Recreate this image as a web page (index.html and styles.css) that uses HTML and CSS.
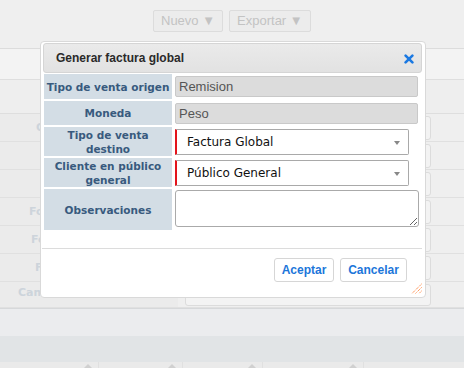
FILE: index.html
```html
<!DOCTYPE html>
<html lang="es">
<head>
    <meta charset="UTF-8">
    <title>Generar factura global</title>
    <link rel="stylesheet" href="styles.css">
</head>
<body>
    <!-- Page behind the modal -->
    <div class="page">
        <div class="toolbar">
            <span class="tb-btn">Nuevo &#9660;</span>
            <span class="tb-btn">Exportar &#9660;</span>
        </div>
        <div class="subbar"></div>
        <div class="section"></div>

        <div class="bg-form">
            <div class="bg-row"><div class="bg-lbl"><span class="bg-txt pad-36">Con</span></div><div class="bg-field"><div class="bg-input"></div></div></div>
            <div class="bg-row"><div class="bg-lbl"></div><div class="bg-field"><div class="bg-input"></div></div></div>
            <div class="bg-row"><div class="bg-lbl"></div><div class="bg-field"><div class="bg-input"></div></div></div>
            <div class="bg-row"><div class="bg-lbl"><span class="bg-txt pad-29">Fol.</span></div><div class="bg-field"><div class="bg-input"></div></div></div>
            <div class="bg-row"><div class="bg-lbl"><span class="bg-txt pad-31">Forma de envío</span></div><div class="bg-field"><div class="bg-input"></div></div></div>
            <div class="bg-row"><div class="bg-lbl"><span class="bg-txt pad-35">Fecha de emisión</span></div><div class="bg-field"><div class="bg-input"></div></div></div>
            <div class="bg-row bg-row-last"><div class="bg-lbl"><span class="bg-txt pad-18">Campo adicional</span></div><div class="bg-field"><div class="bg-input"></div></div></div>
        </div>

        <div class="bar1"></div>
        <div class="bar2"></div>
        <div class="thead">
            <div class="th" style="width: 98px"><span class="sort"></span></div>
            <div class="th" style="width: 83px"><span class="sort"></span></div>
            <div class="th" style="width: 79px"><span class="sort"></span></div>
            <div class="th" style="width: 100px"><span class="sort"></span></div>
            <div class="th th-last"></div>
        </div>
    </div>

    <!-- Modal dialog -->
    <div class="dialog">
        <div class="dlg-title">
            <span>Generar factura global</span>
            <svg class="close" width="10" height="10" viewBox="0 0 10 10">
                <path d="M1.6 1.6 L8.4 8.4 M8.4 1.6 L1.6 8.4" stroke="#1b79e2" stroke-width="2.6" stroke-linecap="round"/>
            </svg>
        </div>

        <div class="dlg-form">
            <div class="lbl">Tipo de venta origen</div>
            <div class="cell"><div class="ro-input">Remision</div></div>

            <div class="lbl">Moneda</div>
            <div class="cell"><div class="ro-input">Peso</div></div>

            <div class="lbl">Tipo de venta<br>destino</div>
            <div class="cell">
                <div class="select"><span>Factura Global</span><span class="arrow"></span></div>
            </div>

            <div class="lbl">Cliente en público<br>general</div>
            <div class="cell">
                <div class="select"><span>Público General</span><span class="arrow"></span></div>
            </div>

            <div class="lbl">Observaciones</div>
            <div class="cell cell-top"><textarea class="obs"></textarea></div>
        </div>

        <div class="dlg-foot">
            <button class="btn btn-ok">Aceptar</button>
            <button class="btn btn-cancel">Cancelar</button>
        </div>

        <svg class="grip" width="11" height="11" viewBox="0 0 11 11">
            <path d="M10.5 1 L1 10.5 M10.5 4.5 L4.5 10.5 M10.5 8 L8 10.5" stroke="#ff6a13" stroke-width="1" stroke-dasharray="1 1"/>
        </svg>
    </div>
</body>
</html>
```

FILE: styles.css
```css
body {
    margin: 0;
    width: 464px;
    height: 368px;
    overflow: hidden;
    font-family: "Liberation Sans", Arial, sans-serif;
    background: #eaeaea;
    position: relative;
}

/* background page */
.toolbar {
    height: 49px;
    box-sizing: border-box;
    padding: 10px 0 0 153px;
    display: flex;
    gap: 6px;
    background: #efefef;
    border-bottom: 1px solid #dcdcdc;
}
.tb-btn {
    height: 22px;
    box-sizing: border-box;
    padding: 0 7px;
    border: 1px solid #dcdcdc;
    border-radius: 2px;
    background: #ececec;
    color: #c3c3c3;
    font-size: 13px;
    line-height: 20px;
}
.subbar {
    height: 30px;
    background: #f3f3f3;
    border-bottom: 1px solid #dedede;
}
.section {
    height: 33px;
    background: #eeeeee;
    border-bottom: 1px solid #dedede;
}
.bg-row {
    display: flex;
    height: 27px;
    border-bottom: 1px solid #e0e0e0;
}
.bg-row-last {
    height: 25px;
}
.bg-lbl {
    width: 178px;
    background: #ebebeb;
}
.bg-txt {
    display: block;
    white-space: nowrap;
    font: bold 11px "DejaVu Sans", Verdana, sans-serif;
    line-height: 27px;
    color: #cdd4db;
}
.bg-row-last .bg-txt {
    line-height: 22px;
}
.pad-18 { padding-left: 18px; }
.pad-29 { padding-left: 29px; }
.pad-31 { padding-left: 31px; }
.pad-35 { padding-left: 35px; }
.pad-36 { padding-left: 36px; }
.bg-field {
    flex: 1;
    padding: 2px 33px 1px 7px;
    background: #efefef;
}
.bg-input {
    height: 100%;
    box-sizing: border-box;
    border: 1px solid #dcdcdc;
    border-radius: 3px;
    background: #f3f3f3;
}
.bar1 {
    height: 27px;
    background: #ebecee;
    border-top: 1px solid #d6d8da;
}
.bar2 {
    height: 26px;
    background: #e1e4e6;
}
.thead {
    display: flex;
    height: 20px;
    background: #eaeaea;
}
.th {
    position: relative;
    border-right: 1px solid #e0e0e0;
}
.th-last {
    flex: 1;
    border-right: none;
}
.sort {
    position: absolute;
    right: 6px;
    top: 2px;
    border-left: 4px solid transparent;
    border-right: 4px solid transparent;
    border-bottom: 4px solid #d0d0d0;
}

/* dialog */
.dialog {
    position: absolute;
    left: 40px;
    top: 41px;
    width: 386px;
    height: 257px;
    box-sizing: border-box;
    padding: 1px 3px 0 1px;
    background: #fff;
    border: 1px solid #d9d9d9;
    border-radius: 4px;
}
.dlg-title {
    height: 30px;
    box-sizing: border-box;
    margin-left: 1px;
    padding: 0 7px 0 12px;
    display: flex;
    align-items: center;
    justify-content: space-between;
    background: linear-gradient(#eaeaea, #e2e2e2);
    border: 1px solid #d5d5d5;
    border-radius: 3px;
    font-weight: bold;
    font-size: 12px;
    color: #2a2a2a;
}
.close {
    margin-top: 1px;
}
.dlg-form {
    display: grid;
    grid-template-columns: 128px 244px;
    grid-template-rows: 25px 24px 29px 29px 41px;
    column-gap: 3px;
    row-gap: 2px;
    margin: 1px 0 0 2px;
}
.lbl {
    display: flex;
    align-items: center;
    justify-content: center;
    text-align: center;
    background: #d3dde5;
    color: #385a7e;
    font: bold 10.5px "DejaVu Sans", Verdana, sans-serif;
    line-height: 14px;
    white-space: nowrap;
}
.cell {
    display: flex;
    align-items: center;
}
.cell-top {
    align-items: flex-start;
}
.ro-input {
    width: 243px;
    height: 21px;
    box-sizing: border-box;
    padding: 0 3px;
    border: 1px solid #c9c9c9;
    border-radius: 2px;
    background: #dcdcdc;
    color: #555;
    font-size: 13px;
    line-height: 19px;
}
.select {
    width: 234px;
    height: 26px;
    box-sizing: border-box;
    padding: 0 8px 0 10px;
    display: flex;
    align-items: center;
    justify-content: space-between;
    border: 1px solid #a9a9a9;
    border-left: 2px solid #e3141c;
    border-radius: 0 2px 2px 0;
    background: #fff;
    color: #111;
    font: 12px "DejaVu Sans", Verdana, sans-serif;
}
.arrow {
    margin-top: 2px;
    border-left: 3px solid transparent;
    border-right: 3px solid transparent;
    border-top: 4px solid #888;
}
.obs {
    width: 244px;
    height: 37px;
    box-sizing: border-box;
    margin: 1px 0 0;
    border: 1px solid #aaa;
    border-radius: 3px;
    background: #fff;
}
.dlg-foot {
    margin-top: 18px;
    padding: 9px 15px 0 0;
    display: flex;
    justify-content: flex-end;
    gap: 6px;
    border-top: 1px solid #dcdcdc;
}
.btn {
    height: 24px;
    padding: 0;
    border: 1px solid #d6d6d6;
    border-radius: 3px;
    background: #fff;
    color: #1c76da;
    font: bold 12px "Liberation Sans", Arial, sans-serif;
    cursor: pointer;
}
.btn-ok {
    width: 60px;
}
.btn-cancel {
    width: 67px;
}
.grip {
    position: absolute;
    right: 3px;
    bottom: 3px;
}
```
